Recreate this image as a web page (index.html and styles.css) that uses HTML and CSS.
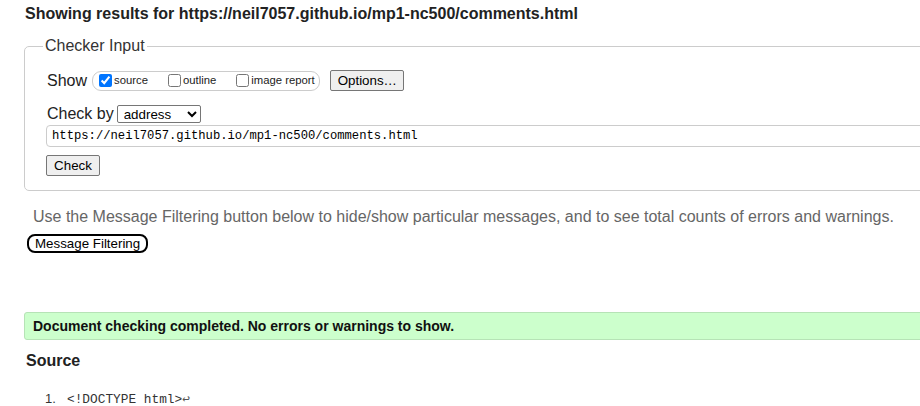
FILE: index.html
```html
<!DOCTYPE html>
<html lang="en">
<head>
<meta charset="utf-8">
<title>Showing results for comments.html</title>
<link rel="stylesheet" href="styles.css">
</head>
<body>
<div class="page">
  <h2 class="title">Showing results for https://neil7057.github.io/mp1-nc500/comments.html</h2>
  <fieldset class="checker">
    <legend class="checker-legend">Checker Input</legend>
    <div class="row row-show">
      <span class="row-label">Show</span>
      <span class="pill">
        <label class="opt"><input type="checkbox" class="cb" checked>source</label>
        <label class="opt"><input type="checkbox" class="cb">outline</label>
        <label class="opt"><input type="checkbox" class="cb">image report</label>
      </span>
      <button class="btn btn-options" type="button">Options…</button>
    </div>
    <div class="row row-by">
      <span class="row-label">Check by</span>
      <select class="sel"><option>address</option></select>
    </div>
    <div class="url-row">
      <input class="url" type="text" value="https://neil7057.github.io/mp1-nc500/comments.html">
    </div>
    <div class="check-row">
      <button class="btn btn-check" type="button">Check</button>
    </div>
  </fieldset>
  <p class="hint">Use the Message Filtering button below to hide/show particular messages, and to see total counts of errors and warnings.</p>
  <button class="filter-btn" type="button">Message Filtering</button>
  <div class="success">Document checking completed. No errors or warnings to show.</div>
  <h3 class="source-title">Source</h3>
  <ol class="source">
    <li class="source-line"><code class="code">&lt;!DOCTYPE html&gt;<span class="lf">↩</span></code></li>
  </ol>
</div>
</body>
</html>
```
FILE: styles.css
```css
html, body {
  margin: 0;
  padding: 0;
  overflow: hidden;
  background: #fff;
}
body {
  font-family: "Liberation Sans", Arial, sans-serif;
  color: #222;
}
.page {
  width: 1100px;
  padding-left: 24px;
}
.title {
  margin: 5px 0 0 1px;
  font-size: 16px;
  line-height: 18px;
  font-weight: bold;
  color: #222;
}
.checker {
  margin: 14px 0 0 0;
  padding: 15px 22px 14px 21px;
  border: 1px solid #ccc;
  border-radius: 5px;
  min-width: 0;
}
.checker-legend {
  margin-left: -3px;
  padding: 0 2px;
  font-size: 16px;
  line-height: 18px;
  color: #333;
}
.row {
  display: flex;
  align-items: center;
}
.row-show {
  height: 21px;
}
.row-by {
  margin-top: 13px;
  height: 20px;
}
.row-label {
  margin-left: 1px;
  font-size: 16px;
  line-height: 18px;
  color: #222;
}
.pill {
  display: inline-flex;
  align-items: center;
  height: 18px;
  margin-left: 5px;
  padding: 0 4px 0 6px;
  border: 1px solid #ccc;
  border-radius: 9px;
}
.opt {
  display: inline-flex;
  align-items: center;
  font-size: 11.3px;
  line-height: 13px;
  color: #222;
}
.opt + .opt {
  margin-left: 20px;
}
.cb {
  width: 13px;
  height: 13px;
  margin: 0 2px 0 0;
}
.btn {
  font-family: "Liberation Sans", Arial, sans-serif;
  font-size: 13.333px;
  line-height: 15px;
  color: #000;
  background: #efefef;
  border: 1px solid #767676;
  border-radius: 2px;
  padding: 2px 7px;
  height: 21px;
  box-sizing: border-box;
}
.btn-options {
  margin-left: 10px;
  width: 74px;
}
.sel {
  margin-left: 3px;
  width: 84px;
  height: 18px;
  font-family: "Liberation Sans", Arial, sans-serif;
  font-size: 13.333px;
  color: #000;
  border: 1px solid #767676;
  border-radius: 2px;
  background: #fff;
  padding: 0 0 0 2px;
}
.url-row {
  margin-top: 1px;
}
.url {
  display: block;
  box-sizing: border-box;
  width: 100%;
  height: 22px;
  margin: 0;
  padding: 0 5px;
  border: 1px solid #ccc;
  border-radius: 4px;
  font-family: "Liberation Mono", "DejaVu Sans Mono", monospace;
  font-size: 12.2px;
  color: #000;
  outline: none;
}
.check-row {
  margin-top: 8px;
  display: flex;
}
.btn-check {
  width: 54px;
}
.hint {
  margin: 17px 0 0 9px;
  font-size: 16px;
  line-height: 18px;
  color: #666;
}
.filter-btn {
  display: block;
  margin: 8px 0 0 3px;
  height: 19px;
  padding: 0 6px;
  box-sizing: border-box;
  font-family: "Liberation Sans", Arial, sans-serif;
  font-size: 13.333px;
  line-height: 15px;
  color: #000;
  background: #fff;
  border: 2px solid #000;
  border-radius: 8px;
}
.success {
  margin-top: 59px;
  padding: 5px 8px;
  font-size: 14px;
  line-height: 16px;
  font-weight: bold;
  color: #111;
  background: #ccffcc;
  border: 1px solid #b6e3b6;
  border-radius: 3px;
}
.source-title {
  margin: 12px 0 0 2px;
  font-size: 16px;
  line-height: 18px;
  font-weight: bold;
  color: #222;
}
.source {
  margin: 21px 0 0 0;
  padding-left: 43px;
  list-style: none;
}
.source-line {
  font-size: 13px;
  line-height: 16px;
  color: #333;
}
.source-line::before {
  content: counter(list-item) ".";
  display: inline-block;
  width: 22px;
  margin-left: -22px;
}
.code {
  font-family: "Liberation Mono", "DejaVu Sans Mono", monospace;
  font-size: 12.8px;
  color: #333;
}
.lf {
  color: #555;
}
```
